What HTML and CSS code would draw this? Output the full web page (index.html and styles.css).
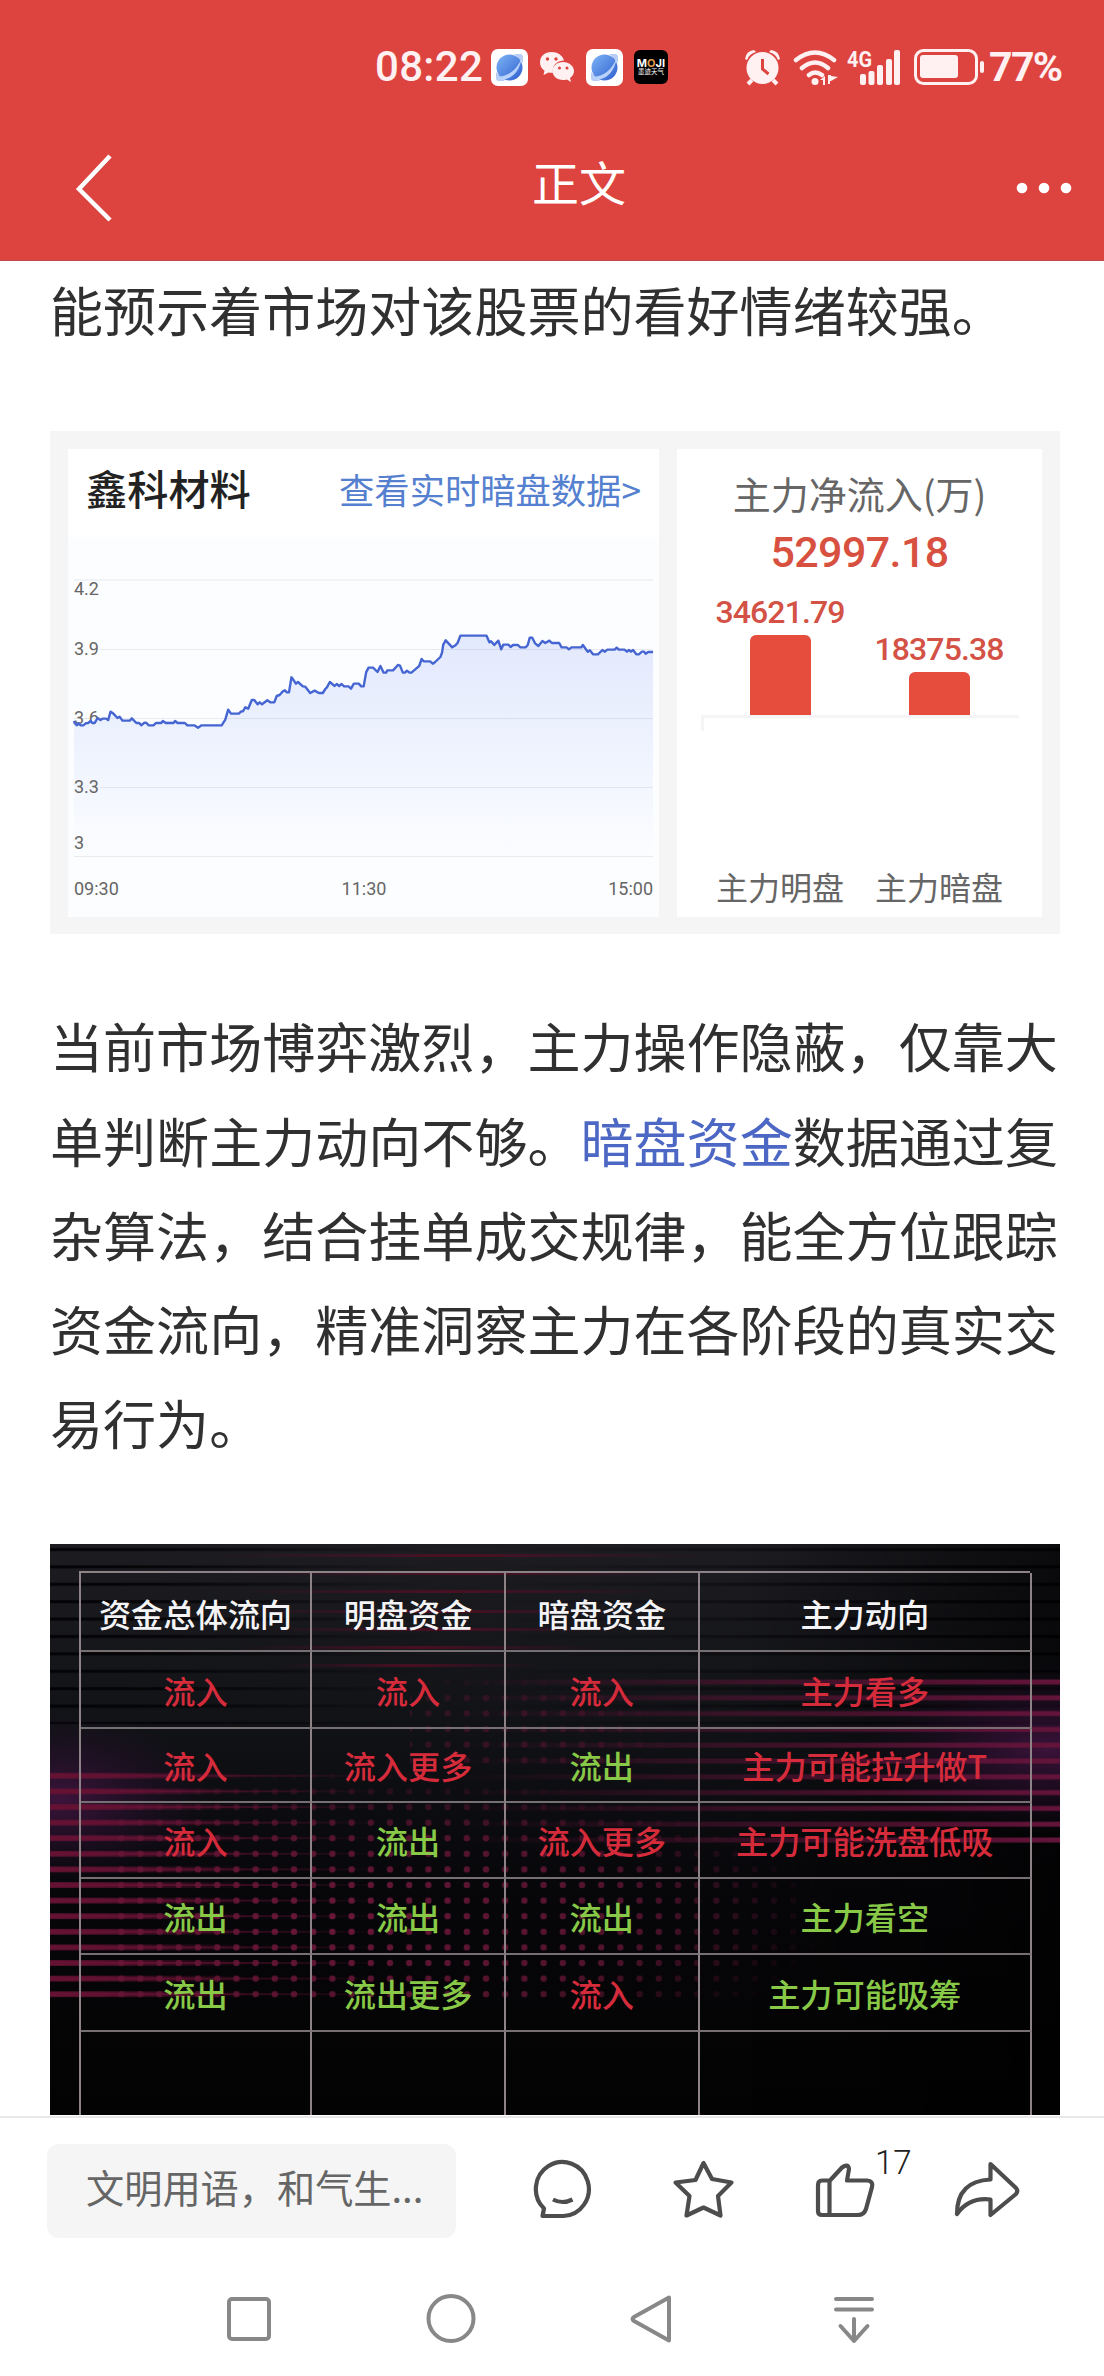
FILE: index.html
```html
<!DOCTYPE html>
<html lang="zh-CN">
<head>
<meta charset="utf-8">
<title>正文</title>
<link rel="stylesheet" href="styles.css">
</head>
<body>
<svg class="defs" width="0" height="0">
  <defs>
    <linearGradient id="globeFill" x1="0" y1="0" x2="1" y2="1"><stop offset="0" stop-color="#7db4f5"/><stop offset="1" stop-color="#2f5fd0"/></linearGradient>
    <symbol id="globe" viewBox="0 0 37 37">
      <rect width="37" height="37" rx="7" fill="#fff"/>
      <path d="M23 5h6q3 0 3 3v6M14 32H8q-3 0-3-3v-6" fill="#b9cdf4"/>
      <circle cx="18.500" cy="18.500" r="13" fill="url(#globeFill)"/>
      <path d="M6 28Q24 27 31 8Q27 31 8 31Z" fill="#b8d2fb"/>
    </symbol>
  </defs>
</svg>
<header class="top">
  <div class="status">
    <span class="time">08:22</span>
    <svg class="app" width="37" height="37"><use href="#globe"/></svg>
    <svg class="wechat" width="36" height="32" viewBox="0 0 36 32">
      <path fill="#fff1f1" d="M12.500 1C5.500 1 1 5.500 1 11.500c0 3.500 1.700 6.300 4.500 8.200L4.500 24l5-2.500q2 .5 4.500.3C12.500 14 19 9.500 25 9.500 23.500 4 18.500 1 12.500 1Z"/>
      <path fill="#fff1f1" d="M24 11c-6 0-10.500 4-10.500 9s4.500 9 10.500 9q2 0 3.800-.6L32 31l-1-4c2.600-1.700 4-4.200 4-7 0-5-5-9-11-9Z"/>
      <g fill="#dd4440"><circle cx="8.500" cy="8" r="1.700"/><circle cx="17" cy="8" r="1.700"/><circle cx="20.500" cy="17" r="1.500"/><circle cx="28" cy="17" r="1.500"/></g>
    </svg>
    <svg class="app" width="37" height="37"><use href="#globe"/></svg>
    <div class="moji"><b>M<i>O</i>JI</b><span>墨迹天气</span></div>
    <svg class="signals" width="240" height="40" viewBox="743 46 240 40">
      <g fill="#fff1f1" stroke="none">
        <circle cx="761.500" cy="67" r="16"/>
        <path d="M744 58q1-8 9-9l2 2q-7 2-9 8zM779 58q-1-8-9-9l-2 2q7 2 9 8z"/>
      </g>
      <path d="M751 79l-4 4M772 79l4 4" stroke="#fff1f1" stroke-width="4"/>
      <path d="M761.500 58v10l6 5" fill="none" stroke="#dd4440" stroke-width="3"/>
      <g fill="none" stroke="#fff1f1" stroke-width="4.500" stroke-linecap="round">
        <path d="M795 59q19-15 38 0M801 67q13-11 26 0M808 74q6-5 13 0"/>
      </g>
      <circle cx="814" cy="80.500" r="3.500" fill="#fff1f1"/>
      <path d="M824 75v9h-2v-5h-3zM827 74v9h2v-3h1l7-4-7-1v-1z" fill="#fff1f1"/>
      <text x="846" y="66" class="net" textLength="25" lengthAdjust="spacingAndGlyphs">4G</text>
      <g fill="#fff1f1"><rect x="859" y="73" width="6" height="11" rx="2"/><rect x="867.500" y="70" width="6" height="14" rx="2"/><rect x="876" y="64" width="6" height="20" rx="2"/><rect x="885" y="58" width="6" height="26" rx="2"/><rect x="893" y="49" width="6" height="35" rx="2"/></g>
      <rect x="914.500" y="49.500" width="61" height="33" rx="8" fill="none" stroke="#fff1f1" stroke-width="3"/>
      <rect x="919" y="54" width="38" height="23" rx="3" fill="#fff1f1"/>
      <rect x="979" y="60" width="4" height="12" rx="2" fill="#fff1f1"/>
    </svg>
    <span class="pct">77%</span>
  </div>
  <nav class="titlebar">
    <svg width="44" height="72" viewBox="0 0 44 72" fill="none"><path d="M37 6 8 37l29 31" stroke="#b73835" stroke-width="4"/><path d="M38 3 7 36l31 31" stroke="#fff" stroke-width="4.500" transform="translate(0 1)"/></svg>
    <h1>正文</h1>
    <svg width="60" height="12" viewBox="0 0 60 12" fill="#fff"><circle cx="8" cy="6" r="5.300"/><circle cx="30" cy="6" r="5.300"/><circle cx="52" cy="6" r="5.300"/></svg>
  </nav>
</header>

<main class="article">
  <p class="lead">能预示着市场对该股票的看好情绪较强。</p>

  <section class="stock">
    <div class="panel trend">
      <div class="trend-head"><h2>鑫科材料</h2><a>查看实时暗盘数据&gt;</a></div>
      <svg class="trend-chart" width="591" height="380" viewBox="0 0 591 380">
        <defs><linearGradient id="area" x1="0" y1="0" x2="0" y2="1"><stop offset="0" stop-color="#e1e8fc"/><stop offset=".5" stop-color="#edf2fe"/><stop offset="1" stop-color="#fcfdff"/></linearGradient></defs>
        <g class="axis"><text x="6" y="58">4.2</text><text x="6" y="118">3.9</text><text x="6" y="187">3.6</text></g>
        <g transform="translate(-28 83) scale(.40816 .33333)">
          <path fill="url(#area)" fill-opacity=".95" d="M83 304 90 316 105 315 122 305 140 296 165 298 173 275 190 292 203 302 225 297 240 309 255 308 275 316 300 303 330 303 355 309 387 323 400 316 445 316 456 295 461 269 468 281 487 281 510 261 522 239 533 252 557 242 574 247 580 228 600 212 610 216 616 172 627 187 650 202 662 219 690 220 710 186 722 197 740 194 762 205 775 190 793 200 799 155 806 143 818 143 828 156 834 140 842 158 865 150 880 135 889 158 910 158 928 138 935 117 948 124 963 131 981 111 988 72 994 61 1010 82 1023 69 1030 47 1094 47 1101 67 1123 64 1130 87 1137 75 1190 82 1203 53 1220 76 1230 64 1272 68 1278 82 1296 87 1330 76 1342 94 1362 103 1375 91 1415 85 1455 94 1463 103 1502 96V709H83Z"/>
          <path fill="none" stroke="#4565d2" stroke-width="2.400" stroke-linejoin="round" vector-effect="non-scaling-stroke" d="M83 303 85 309 90 316 95 310 99 316 106 316 112 310 118 309 124 303 128 309 134 309 141 294 148 300 153 296 162 296 167 300 173 275 179 280 190 294 195 290 202 302 220 302 225 295 236 309 243 309 248 316 256 308 261 309 266 316 278 316 284 309 297 309 301 303 308 309 327 309 331 303 337 309 355 309 361 316 378 316 387 323 396 316 445 316 454 299 461 269 468 281 487 281 493 274 497 274 503 262 510 266 519 240 525 240 533 253 538 247 544 253 557 241 564 247 574 247 580 228 587 225 594 215 600 211 605 217 610 217 616 172 620 178 627 191 632 186 644 199 650 200 662 219 673 212 683 219 693 219 699 207 703 202 710 186 722 198 727 192 733 198 739 192 745 199 756 199 762 206 769 191 781 191 787 199 793 199 799 157 805 143 816 143 827 156 834 138 842 158 848 158 851 151 865 151 877 135 882 137 889 158 894 158 899 152 906 158 910 158 925 142 929 138 935 117 940 124 955 124 963 131 968 126 981 111 985 98 988 74 994 61 1010 82 1018 76 1023 69 1030 47 1094 47 1101 67 1105 64 1113 75 1123 62 1130 88 1135 74 1148 74 1153 81 1159 75 1171 75 1177 82 1190 82 1195 75 1200 53 1206 53 1213 70 1221 78 1231 63 1238 69 1248 62 1254 69 1272 69 1278 82 1290 82 1296 88 1302 82 1326 82 1330 75 1342 95 1347 91 1355 103 1367 103 1378 90 1384 95 1390 89 1408 89 1413 83 1418 89 1432 89 1438 95 1443 90 1448 95 1453 90 1461 103 1467 103 1475 95 1480 95 1484 101 1490 96 1502 96"/>
        </g>
        <path d="M6 43H585M32 112.500H585M6 181.500H585M32 250.500H585M6 319.500H585" stroke="#777b92" stroke-opacity=".14"/>
        <g class="axis"><text x="6" y="255.500">3.3</text><text x="6" y="312">3</text>
        <text x="6" y="357.500">09:30</text><text x="296" y="357.500" text-anchor="middle">11:30</text><text x="585" y="357.500" text-anchor="end">15:00</text></g>
      </svg>
    </div>
    <div class="panel flow">
      <h3>主力净流入(万)</h3>
      <strong>52997.18</strong>
      <div class="bars">
        <div class="col"><span>34621.79</span><div class="bar" style="height:80px"></div></div>
        <div class="col"><span>18375.38</span><div class="bar" style="height:43px"></div></div>
      </div>
      <div class="base"></div>
      <div class="legend"><span>主力明盘</span><span>主力暗盘</span></div>
    </div>
  </section>

  <p class="body">当前市场博弈激烈，主力操作隐蔽，仅靠大<br>单判断主力动向不够。<a>暗盘资金</a>数据通过复<br>杂算法，结合挂单成交规律，能全方位跟踪<br>资金流向，精准洞察主力在各阶段的真实交<br>易行为。</p>

  <section class="board">
    <svg class="board-bg" width="1010" height="571" viewBox="0 0 1010 571">
      <defs>
        <linearGradient id="night" x1="0" y1="0" x2="0" y2="1"><stop offset="0" stop-color="#1c1c21"/><stop offset=".32" stop-color="#111216"/><stop offset=".6" stop-color="#07070a"/><stop offset="1" stop-color="#030303"/></linearGradient>
        <linearGradient id="fadeR"><stop offset="0" stop-color="#fff" stop-opacity="0"/><stop offset="1" stop-color="#fff"/></linearGradient>
        <linearGradient id="fadeL"><stop offset="0" stop-color="#fff"/><stop offset=".25" stop-color="#fff" stop-opacity=".9"/><stop offset="1" stop-color="#fff" stop-opacity="0"/></linearGradient>
        <radialGradient id="spot" cx=".3" cy=".65" r=".65"><stop offset="0" stop-color="#fff"/><stop offset=".6" stop-color="#fff" stop-opacity=".75"/><stop offset="1" stop-color="#fff" stop-opacity="0"/></radialGradient>
        <radialGradient id="violet"><stop offset="0" stop-color="#451543" stop-opacity=".85"/><stop offset="1" stop-color="#281033" stop-opacity="0"/></radialGradient>
        <linearGradient id="redline"><stop offset="0" stop-color="#5a0d25" stop-opacity="0"/><stop offset=".5" stop-color="#5a0d25" stop-opacity=".75"/><stop offset="1" stop-color="#5a0d25" stop-opacity="0"/></linearGradient>
        <pattern id="dots" width="19.200" height="15.600" patternUnits="userSpaceOnUse" patternTransform="translate(4 224)"><circle cx="9.600" cy="7.800" r="3.200" fill="#6a1738"/></pattern>
        <pattern id="stripes" width="20" height="15.600" patternUnits="userSpaceOnUse" patternTransform="translate(0 224)"><rect y="5" width="20" height="5.600" fill="#651233"/></pattern>
        <pattern id="threads" width="20" height="15.600" patternUnits="userSpaceOnUse" patternTransform="translate(0 224)"><rect y="6.800" width="20" height="2" fill="#651233"/></pattern>
        <pattern id="rays" width="20" height="15.800" patternUnits="userSpaceOnUse" patternTransform="translate(0 130)"><rect y="5.500" width="20" height="5" fill="#64143a"/></pattern>
        <pattern id="dark" width="20" height="17.400" patternUnits="userSpaceOnUse"><rect y="4" width="20" height="3" fill="#040406"/></pattern>
        <mask id="mR"><rect x="400" y="130" width="610" height="175" fill="url(#fadeR)"/></mask>
        <mask id="mL"><rect y="224" width="200" height="234" fill="url(#fadeL)"/></mask>
        <mask id="mT"><rect y="224" width="340" height="234" fill="url(#fadeL)"/></mask>
        <mask id="mD"><rect x="60" y="224" width="760" height="234" fill="url(#spot)"/></mask>
        <mask id="mU"><rect x="360" y="130" width="280" height="94" fill="url(#spot)"/></mask>
        <mask id="mK"><rect width="380" height="180" fill="url(#fadeL)"/><rect x="450" width="560" height="180" fill="url(#fadeR)"/></mask>
      </defs>
      <rect width="1010" height="571" fill="url(#night)"/>
      <rect width="1010" height="180" fill="url(#dark)" mask="url(#mK)"/>
      <rect x="700" width="310" height="571" fill="url(#fadeR)" style="filter:brightness(0);opacity:.6"/>
      <ellipse cx="10" cy="255" rx="150" ry="85" fill="url(#violet)"/>
      <ellipse cx="1000" cy="205" rx="190" ry="85" fill="url(#violet)"/>
      <g fill="url(#redline)"><rect x="160" y="10" width="500" height="3"/><rect x="190" y="28" width="450" height="3"/><rect x="180" y="46" width="440" height="3"/><rect x="190" y="66" width="400" height="3"/><rect x="210" y="84" width="360" height="3"/><rect x="190" y="102" width="360" height="3"/><rect x="230" y="120" width="260" height="3"/></g>
      <rect y="224" width="200" height="234" fill="url(#stripes)" mask="url(#mL)"/>
      <rect y="224" width="340" height="234" fill="url(#threads)" mask="url(#mT)"/>
      <rect x="60" y="224" width="760" height="234" fill="url(#dots)" mask="url(#mD)"/>
      <rect x="360" y="130" width="280" height="94" fill="url(#dots)" mask="url(#mU)" opacity=".45"/>
      <rect x="400" y="130" width="610" height="172" fill="url(#rays)" mask="url(#mR)"/>
    </svg>
    <div class="grid">
      <b>资金总体流向</b><b>明盘资金</b><b>暗盘资金</b><b>主力动向</b>
      <span>流入</span><span>流入</span><span>流入</span><span>主力看多</span>
      <span>流入</span><span>流入更多</span><span class="out">流出</span><span>主力可能拉升做T</span>
      <span>流入</span><span class="out">流出</span><span>流入更多</span><span>主力可能洗盘低吸</span>
      <span class="out">流出</span><span class="out">流出</span><span class="out">流出</span><span class="out">主力看空</span>
      <span class="out">流出</span><span class="out">流出更多</span><span>流入</span><span class="out">主力可能吸筹</span>
      <span></span><span></span><span></span><span></span>
    </div>
  </section>
</main>

<footer class="actions">
  <div class="reply">文明用语，和气生...</div>
  <svg width="64" height="64" viewBox="531 2158 64 64"><path d="M542.500 2216 544 2208.500A26.500 27 0 1 1 563.500 2216Z"/><path d="M553 2199.500q9.500 5 19.500 0" stroke-linecap="butt"/></svg>
  <svg width="64" height="64" viewBox="671 2158 64 64"><path d="M703.500 2163 695.500 2180 675.500 2182.500 689.500 2196 686.500 2215.500 703.500 2207.500 720.500 2215.500 718 2196 731.500 2182.500 712 2179Z"/></svg>
  <div class="like"><svg width="64" height="64" viewBox="813 2158 64 64"><path d="M829.500 2181 842 2167.500Q848 2163 849 2169L847 2180.500H867Q873.500 2181 872 2187L866 2209Q864 2215 858 2215H822Q818 2215 818 2211V2185Q818 2180.500 822 2180.500H829.500V2215"/></svg><sup>17</sup></div>
  <svg width="72" height="64" viewBox="951 2158 72 64"><path d="M990.500 2164 1016 2188Q1018.500 2191 1016 2194L990.500 2215V2199.500Q969 2197 957 2214Q957 2181 990.500 2179.500Z"/></svg>
</footer>
<nav class="system">
  <svg width="56" height="56" viewBox="0 0 56 56"><rect x="8" y="8" width="40" height="40" rx="3"/></svg>
  <svg width="56" height="56" viewBox="0 0 56 56"><circle cx="28" cy="27.500" r="22.500"/></svg>
  <svg width="56" height="56" viewBox="0 0 56 56"><path d="M45 6.500V49.500L10 30Q7 28 10 26Z"/></svg>
  <svg width="56" height="56" viewBox="0 0 56 56"><path d="M10 8H46M10 18.500H46M28 28V50M14.500 35 28 50 41.500 35" stroke-linecap="round"/></svg>
</nav>
</body>
</html>
```
FILE: styles.css
```css
* { box-sizing: border-box; }
body { margin: 0; width: 1104px; height: 2376px; overflow: hidden; background: #fff; color: #303030; font-family: Roboto, "Noto Sans CJK SC", sans-serif; display: flex; flex-direction: column; }
h1, h2, h3, p { margin: 0; font-weight: 400; }
svg { display: block; flex: none; }
.defs { position: absolute; }

.top { height: 261px; background: #dd4440; border-bottom: 1px solid #c04a47; flex: none; }
.status { height: 115px; padding: 19px 0 0 375px; display: flex; align-items: center; color: #fff1f1; }
.time, .pct { font-weight: 500; font-size: 42px; line-height: 50px; white-space: nowrap; }
.time { width: 116px; letter-spacing: .3px; }
.wechat { margin: 0 11px; }
.moji { width: 34px; height: 34px; margin: 0 76px 0 11px; border-radius: 6px; background: #000; color: #fff; display: flex; flex-direction: column; align-items: center; justify-content: center; }
.moji b { font: 700 11px/10px Inter, sans-serif; }
.moji i { color: #e09a4c; font-style: normal; }
.moji span { font-size: 6.5px; line-height: 8px; }
.net { font: 700 22px Roboto, sans-serif; fill: #fff1f1; }
.pct { margin-left: 5px; letter-spacing: -1.6px; font-weight: 700; font-size: 41px; }
.titlebar { height: 145px; padding: 0 30px 0 72px; display: grid; grid-template-columns: 60px 1fr 60px; align-items: center; color: #fff; }
.titlebar h1 { text-align: center; font-size: 47px; line-height: 60px; padding-left: 12px; transform: translateY(-3px); }

.article { height: 1855px; padding: 0 44px 0 50px; overflow: hidden; flex: none; }
.lead, .body { font-family: "Noto Sans CJK SC", sans-serif; font-size: 53.05px; line-height: 94.3px; white-space: nowrap; }
.lead { padding-top: 1px; }
.body a { color: #4c67c4; }
.body { margin-top: 64px; }

.stock { margin-top: 75px; height: 503px; padding: 18px; background: #f5f5f5; display: grid; grid-template-columns: 591px 365px; gap: 18px; }
.panel { background: #fff; height: 468px; }
.trend-head { height: 88px; padding: 0 18px; display: flex; justify-content: space-between; align-items: center; }
.trend-head h2 { font: 500 41.2px/60px "Noto Sans CJK SC", sans-serif; color: #222; transform: translateY(-6px); }
.trend-head a { font: 400 35.3px/60px "Noto Sans CJK SC", sans-serif; color: #5580cf; transform: translateY(-4px); }
.trend-chart { background: #fcfdff; }
.axis { font: 400 18px Roboto, sans-serif; fill: #666; }
.flow { display: flex; flex-direction: column; align-items: center; }
.flow h3 { margin-top: 16px; font: 400 38px/56px "Noto Sans CJK SC", sans-serif; color: #666; }
.flow strong { margin-top: 6px; font-size: 43px; line-height: 50px; font-weight: 500; letter-spacing: -.6px; color: #d85040; }
.bars { height: 138px; display: flex; gap: 0; align-items: flex-end; }
.col { width: 159px; display: flex; flex-direction: column; align-items: center; }
.col span { font-size: 32px; line-height: 38px; margin-bottom: 4px; font-weight: 500; letter-spacing: -.9px; color: #d35245; }
.bar { width: 61px; border-radius: 6px 6px 0 0; background: #e64d3d; }
.base { width: 318px; height: 16px; border-top: 3px solid #f5f5f5; border-left: 3px solid #f5f5f5; }
.legend { display: flex; width: 318px; margin-top: 131px; }
.legend span { width: 159px; text-align: center; font: 400 32px/48px "Noto Sans CJK SC", sans-serif; color: #666; }

.board { position: relative; margin-top: 74.500px; width: 1010px; height: 571px; background: #070708; overflow: hidden; }
.board-bg { position: absolute; inset: 0; }
.grid { position: relative; margin: 27px 0 0 29px; width: 951px; display: grid; grid-template-columns: 231px 194px 193.500px 332.500px; grid-template-rows: 79px 76.500px 74.500px 76px 76px 76.500px 90px; border-top: 2px solid #8d8386; border-left: 2px solid #8d8386; }
.grid > * { display: flex; align-items: center; justify-content: center; border-right: 2px solid #8d8386; border-bottom: 2px solid #777073; font: 500 32.2px/48px "Noto Sans CJK SC", sans-serif; color: #d52b3b; white-space: nowrap; }
.grid > b { color: #f4f4f6; padding-top: 2px; }
.grid > .out { color: #88c947; }

.actions { height: 121px; flex: none; border-top: 2px solid #e8e8e8; padding: 26px 0 0 47px; display: flex; align-items: flex-start; }
.actions svg { fill: none; stroke: #4d4d4d; stroke-width: 4.200; stroke-linejoin: round; stroke-linecap: round; margin-top: 14px; }
.reply { width: 409px; height: 94px; border-radius: 12px; background: #f5f5f5; padding: 15px 0 0 39px; font: 400 38.2px/56px "Noto Sans CJK SC", sans-serif; color: #666; white-space: nowrap; margin-right: 75px; }
.actions > svg + svg { margin-left: 76px; }
.like { display: flex; margin: 0 74px 0 78px; width: 64px; }
.like sup { font: 300 33px/36px Roboto, sans-serif; color: #222; margin-top: 1px; margin-left: -2px; }
.system { height: 139px; padding: 54px 0 0 221px; display: flex; gap: 145.500px; }
.system svg { fill: none; stroke: #888; stroke-width: 4; stroke-linejoin: round; }
```
